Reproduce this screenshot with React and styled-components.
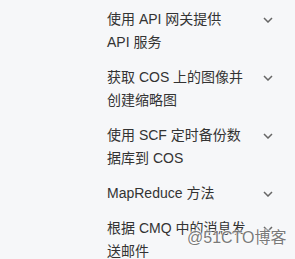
import styled, { createGlobalStyle } from "styled-components";

const GlobalStyle = createGlobalStyle`
  body {
    margin: 0;
    background: #f6f7f9;
    font-family: "Liberation Sans", "Noto Sans CJK SC", sans-serif;
  }
`;

const items = [
  "使用 API 网关提供 API 服务",
  "获取 COS 上的图像并创建缩略图",
  "使用 SCF 定时备份数据库到 COS",
  "MapReduce 方法",
  "根据 CMQ 中的消息发送邮件",
];

export default function App() {
  return (
    <Page>
      <GlobalStyle />
      <Menu>
        {items.map((t) => (
          <Item key={t}>
            <Title>{t}</Title>
            <Arrow>
              <svg width="10" height="6" viewBox="0 0 10 6">
                <path d="M1 1l4 4 4-4" fill="none" stroke="#666" strokeWidth="1.5" />
              </svg>
            </Arrow>
          </Item>
        ))}
      </Menu>
      <Watermark>@51CTO博客</Watermark>
    </Page>
  );
}

const Page = styled.div`
  position: relative;
  width: 295px;
  height: 259px;
  overflow: hidden;
`;

const Menu = styled.ul`
  list-style: none;
  margin: 0;
  padding: 2px 0 0 107px;
`;

const Item = styled.li`
  display: flex;
  align-items: flex-start;
  width: 169px;
  padding: 6px 0;
  cursor: pointer;
`;

const Title = styled.span`
  width: 140px;
  font-size: 14px;
  line-height: 23px;
  color: #333;
`;

const Arrow = styled.span`
  display: flex;
  align-items: center;
  justify-content: center;
  margin-left: auto;
  width: 16px;
  height: 23px;
`;

const Watermark = styled.div`
  position: absolute;
  left: 187px;
  top: 229px;
  font-size: 16px;
  line-height: 18px;
  color: #7a7a7a;
  text-shadow: 0 0 2px #fff, 0 0 2px #fff, 0 0 1px #fff;
  white-space: nowrap;
`;
